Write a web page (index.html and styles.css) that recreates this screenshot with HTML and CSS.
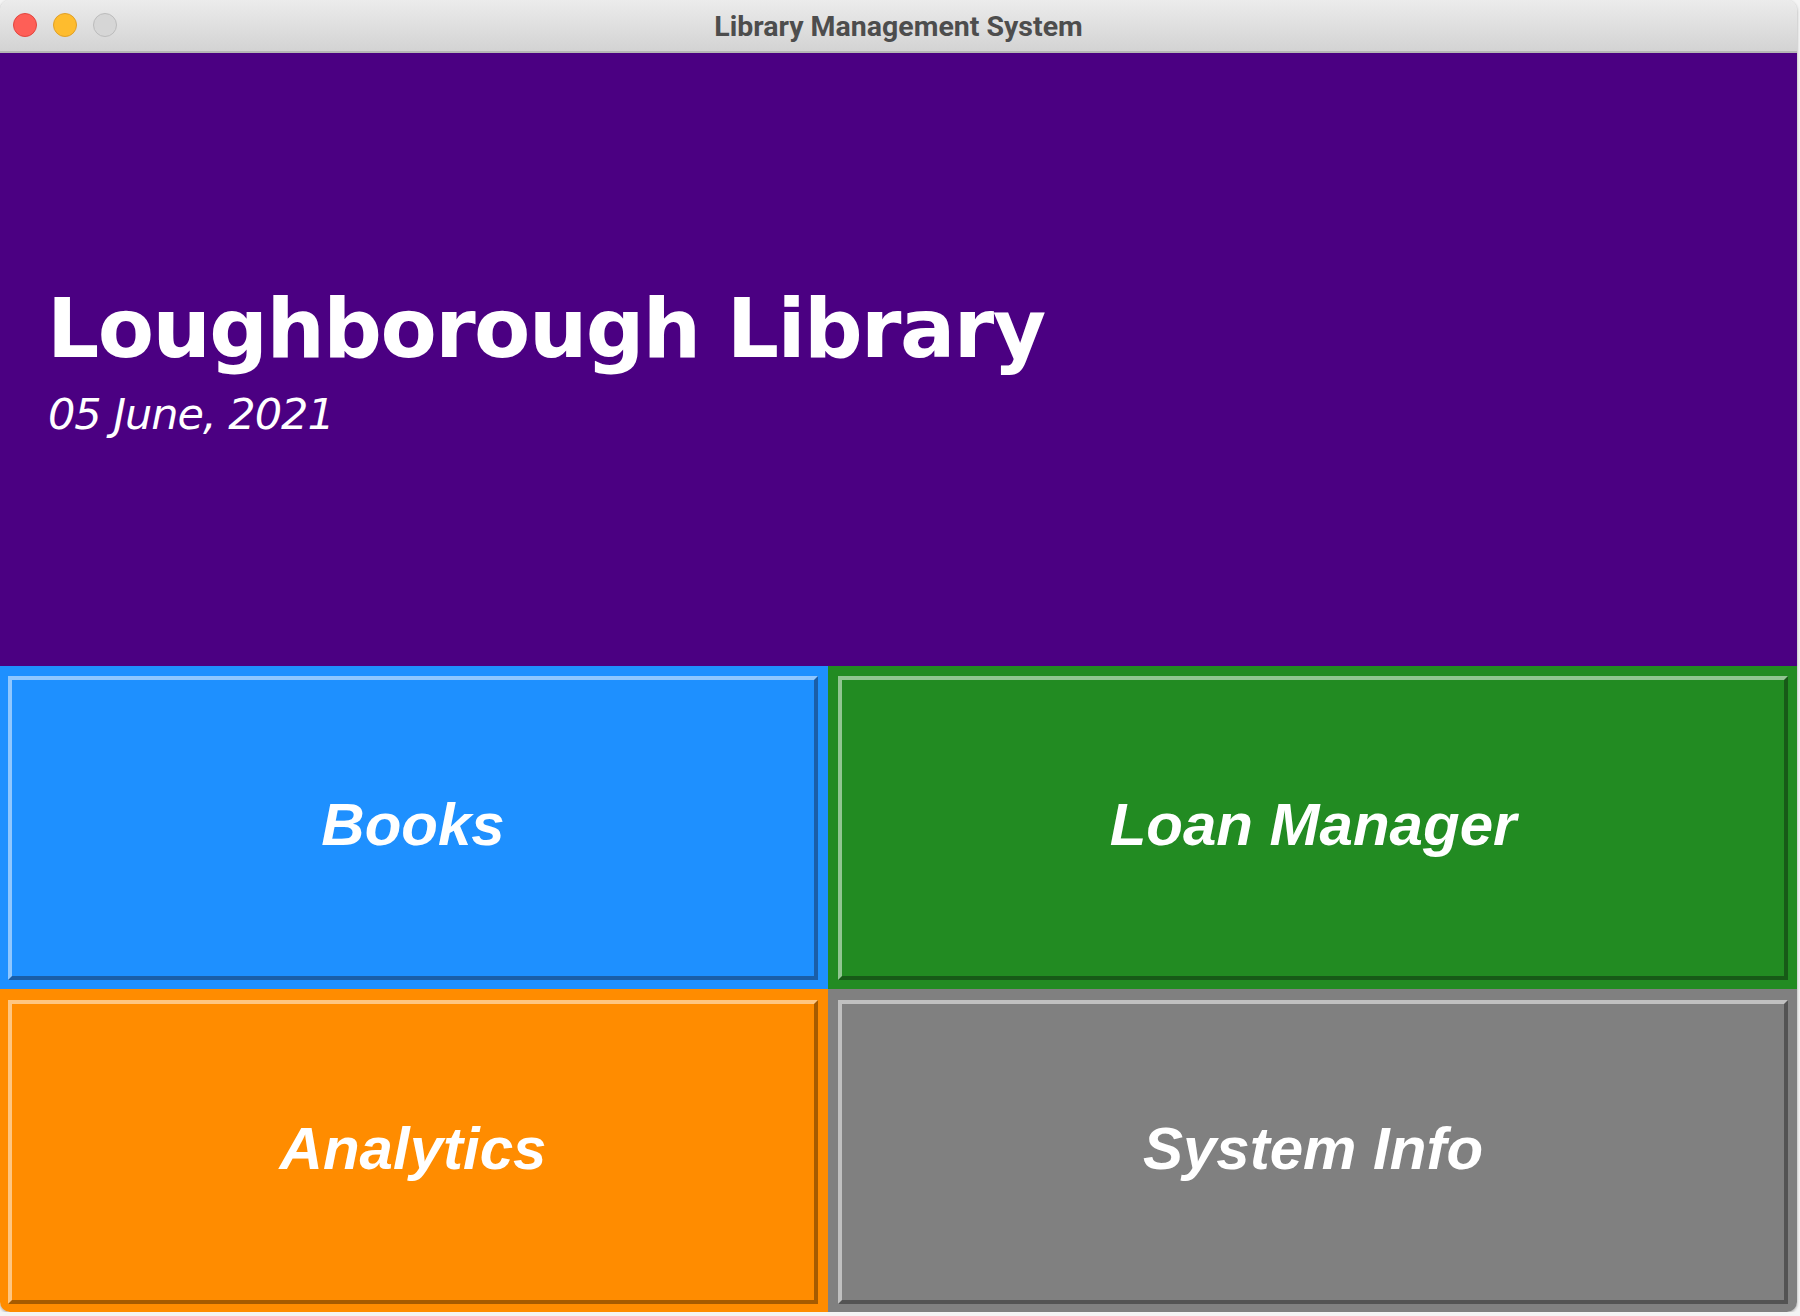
FILE: index.html
```html
<!DOCTYPE html>
<html>
<head>
<meta charset="utf-8">
<title>Library Management System</title>
<link rel="stylesheet" href="styles.css">
</head>
<body>
<div class="window">
  <div class="titlebar">
    <div class="lights">
      <span class="light red"></span>
      <span class="light yellow"></span>
      <span class="light gray"></span>
    </div>
    <div class="title">Library Management System</div>
  </div>
  <div class="header">
    <h1 class="name">Loughborough Library</h1>
    <div class="date">05 June, 2021</div>
  </div>
  <div class="tiles">
    <div class="cell cell-books"><button class="btn btn-blue">Books</button></div>
    <div class="cell cell-loans"><button class="btn btn-green">Loan Manager</button></div>
    <div class="cell cell-analytics"><button class="btn btn-orange">Analytics</button></div>
    <div class="cell cell-info"><button class="btn btn-gray">System Info</button></div>
  </div>
</div>
</body>
</html>
```
FILE: styles.css
```css
html, body {
  margin: 0;
  padding: 0;
  background: #f4f4f4;
}
.window {
  width: 1797px;
  height: 1312px;
  border-radius: 10px;
  overflow: hidden;
  display: flex;
  flex-direction: column;
  box-shadow: 0 1px 3px rgba(0,0,0,0.35);
}
.titlebar {
  height: 53px;
  flex: none;
  box-sizing: border-box;
  padding-top: 1px;
  position: relative;
  display: flex;
  align-items: center;
  justify-content: center;
  background: linear-gradient(#ececec, #d3d3d3);
  border-bottom: 2px solid #b6b6b6;
}
.lights {
  position: absolute;
  left: 13px;
  top: 13px;
  display: flex;
  gap: 16px;
}
.light {
  width: 22px;
  height: 22px;
  border-radius: 50%;
  border: 1px solid;
}
.red { background: #fe5f57; border-color: #e2463f; }
.yellow { background: #febc2e; border-color: #e0a028; }
.gray { background: #d6d6d6; border-color: #bcbcbc; }
.title {
  font-family: "Roboto", "Liberation Sans", sans-serif;
  font-weight: 700;
  font-size: 28.5px;
  color: #4d4d4d;
}
.header {
  height: 613px;
  flex: none;
  box-sizing: border-box;
  background: #4b0082;
  color: #fff;
  padding: 235px 0 0 47px;
}
.name {
  margin: 0;
  font-family: "DejaVu Sans", Verdana, sans-serif;
  font-weight: 700;
  font-size: 82px;
  line-height: 82px;
  letter-spacing: -1.55px;
}
.date {
  margin-top: 23px;
  padding-left: 1px;
  font-family: "DejaVu Sans", Verdana, sans-serif;
  font-style: italic;
  font-size: 43px;
  line-height: 43px;
  letter-spacing: -1px;
}
.tiles {
  flex: 1;
  display: grid;
  grid-template-columns: 828px 1fr;
  grid-template-rows: 323px 1fr;
}
.cell {
  display: flex;
  box-sizing: border-box;
}
.cell-books { background: #1e90ff; padding: 10px 10px 9px 8px; }
.cell-loans { background: #228b22; padding: 10px 9px 9px 10px; }
.cell-analytics { background: #ff8c00; padding: 11px 10px 8px 8px; }
.cell-info { background: #808080; padding: 11px 9px 8px 10px; }
.btn {
  flex: 1;
  margin: 0;
  border: 4px solid;
  font-family: "Liberation Sans", Arial, sans-serif;
  font-weight: 700;
  font-style: italic;
  font-size: 60px;
  color: #fff;
  padding: 0 0 8px 0;
  cursor: pointer;
}
.btn-blue {
  background: #1e90ff;
  border-color: #8fc7ff #1a5ea8 #1a5ea8 #8fc7ff;
}
.btn-green {
  background: #228b22;
  border-color: #91c591 #175a17 #175a17 #91c591;
}
.btn-orange {
  background: #ff8c00;
  border-color: #ffc680 #a65b00 #a65b00 #ffc680;
}
.btn-gray {
  background: #808080;
  border-color: #c0c0c0 #535353 #535353 #c0c0c0;
}
```
